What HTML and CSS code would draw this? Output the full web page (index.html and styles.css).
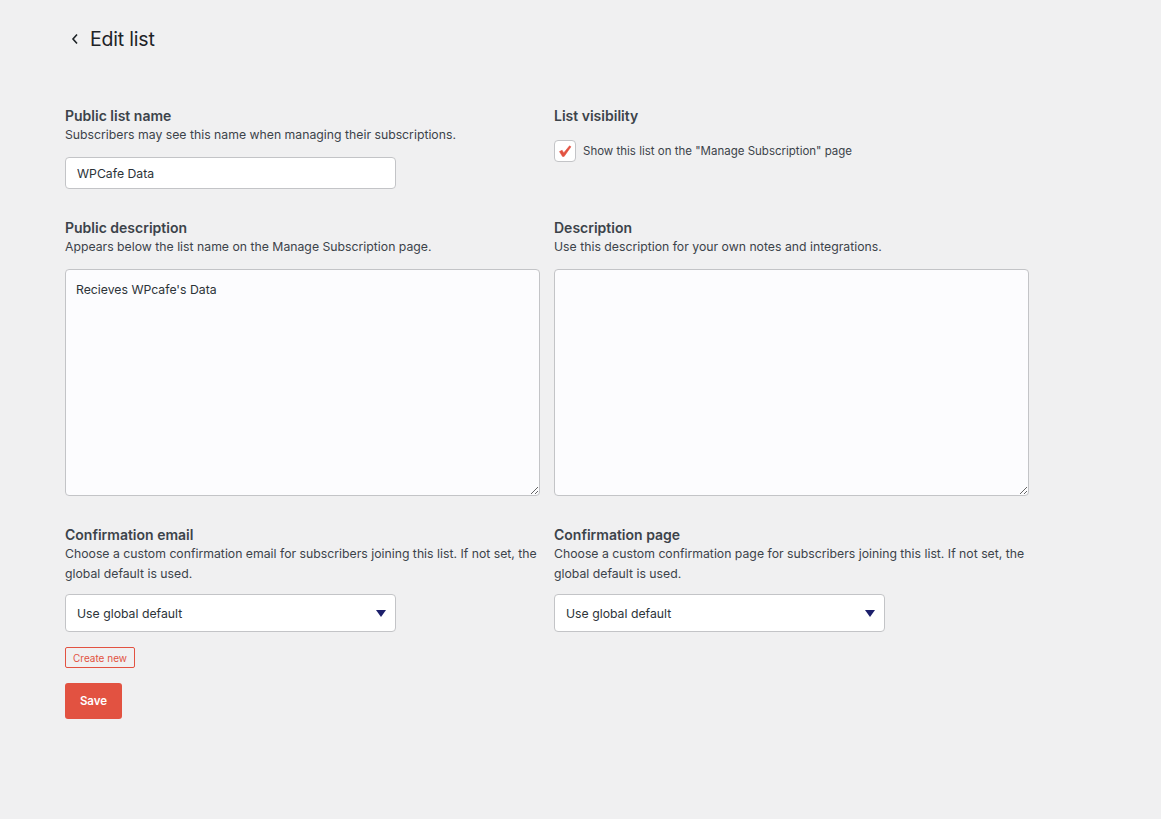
FILE: index.html
```html
<!DOCTYPE html>
<html>
<head>
	<title>Edit list</title>
	<link rel="stylesheet" href="styles.css">
</head>
<body>
	<div class="page">
		<div class="page-header">
			<a class="back-link" href="#">
				<svg width="8" height="12" viewBox="0 0 8 12"><path d="M6 1.5 L2 6 L6 10.5" fill="none" stroke="#1d2327" stroke-width="1.6"/></svg>
			</a>
			<h1>Edit list</h1>
		</div>

		<form class="list-form">
			<div class="field">
				<label class="field-label">Public list name</label>
				<p class="field-help">Subscribers may see this name when managing their subscriptions.</p>
				<input class="text-input" type="text" value="WPCafe Data">
			</div>
			<div class="field">
				<label class="field-label">List visibility</label>
				<label class="check-row">
					<span class="check-box">
						<svg width="14" height="14" viewBox="0 0 14 14"><path d="M1.5 7.6 L4.1 6.2 L5.7 8.9 L11.6 1.8 L12.9 2.8 L6.1 12.4 L4.5 12.4 Z" fill="#e25241" stroke="#e25241" stroke-width="0.6" stroke-linejoin="round"/></svg>
					</span>
					Show this list on the "Manage Subscription" page
				</label>
			</div>

			<div class="field">
				<label class="field-label">Public description</label>
				<p class="field-help">Appears below the list name on the Manage Subscription page.</p>
				<textarea class="text-area">Recieves WPcafe's Data</textarea>
			</div>
			<div class="field">
				<label class="field-label">Description</label>
				<p class="field-help">Use this description for your own notes and integrations.</p>
				<textarea class="text-area"></textarea>
			</div>

			<div class="field">
				<label class="field-label">Confirmation email</label>
				<p class="field-help">Choose a custom confirmation email for subscribers joining this list. If not set, the global default is used.</p>
				<div class="select">
					<span>Use global default</span>
					<svg width="10" height="7" viewBox="0 0 10 7"><path d="M0 0 H10 L5 7 Z" fill="#1c1f6b"/></svg>
				</div>
				<button type="button" class="btn-outline">Create new</button>
				<button type="button" class="btn-save">Save</button>
			</div>
			<div class="field">
				<label class="field-label">Confirmation page</label>
				<p class="field-help">Choose a custom confirmation page for subscribers joining this list. If not set, the global default is used.</p>
				<div class="select">
					<span>Use global default</span>
					<svg width="10" height="7" viewBox="0 0 10 7"><path d="M0 0 H10 L5 7 Z" fill="#1c1f6b"/></svg>
				</div>
			</div>
		</form>
	</div>
</body>
</html>
```

FILE: styles.css
```css
body {
	margin: 0;
	background-color: #f0f0f1;
	font-family: Inter, "Liberation Sans", sans-serif;
	color: #3c434a;
}
.page {
	padding: 26px 0 40px 65px;
}
.page-header {
	display: flex;
	align-items: center;
	height: 26px;
}
.back-link {
	display: flex;
	width: 25px;
	padding-left: 6px;
	box-sizing: border-box;
}
.page-header h1 {
	margin: 0;
	font-size: 19.5px;
	font-weight: 400;
	color: #1d2327;
	letter-spacing: -0.2px;
}
.list-form {
	display: grid;
	grid-template-columns: 475px 475px;
	column-gap: 14px;
	row-gap: 30px;
	margin-top: 55px;
}
.field {
	display: flex;
	flex-direction: column;
	align-items: flex-start;
}
.field-label {
	font-size: 14px;
	font-weight: 600;
	line-height: 18px;
	color: #3c434a;
}
.field-help {
	margin: 0;
	font-size: 12.25px;
	line-height: 20px;
	color: #3c434a;
}
.text-input {
	margin-top: 12px;
	width: 331px;
	height: 32px;
	box-sizing: border-box;
	border: 1px solid #c3c4c7;
	border-radius: 4px;
	background: #fff;
	padding: 0 11px;
	font: 12.25px Inter, "Liberation Sans", sans-serif;
	color: #2c3338;
}
.text-area {
	margin-top: 12px;
	width: 475px;
	height: 227px;
	box-sizing: border-box;
	border: 1px solid #c3c4c7;
	border-radius: 4px;
	background: #fcfcfe;
	padding: 10px 10px;
	font: 12.25px/20px Inter, "Liberation Sans", sans-serif;
	color: #2c3338;
}
.check-row {
	display: flex;
	align-items: center;
	margin-top: 15px;
	font-size: 11.5px;
	color: #3c434a;
}
.check-box {
	display: flex;
	align-items: center;
	justify-content: center;
	width: 22px;
	height: 22px;
	box-sizing: border-box;
	border: 1px solid #c3c4c7;
	border-radius: 4px;
	background: #fff;
	margin-right: 7px;
}
.select {
	display: flex;
	align-items: center;
	justify-content: space-between;
	margin-top: 10px;
	width: 331px;
	height: 38px;
	box-sizing: border-box;
	border: 1px solid #c3c4c7;
	border-radius: 4px;
	background: #fff;
	padding: 0 9px 0 11px;
	font-size: 12.25px;
	color: #2c3338;
}
.btn-outline {
	margin-top: 15px;
	height: 21px;
	padding: 0 7px;
	border: 1px solid #e25241;
	border-radius: 2px;
	background: transparent;
	color: #e25241;
	font: 10px Inter, "Liberation Sans", sans-serif;
}
.btn-save {
	margin-top: 15px;
	width: 57px;
	height: 36px;
	border: none;
	border-radius: 3px;
	background: #e25241;
	color: #fff;
	font: 600 11.5px Inter, "Liberation Sans", sans-serif;
}
```
